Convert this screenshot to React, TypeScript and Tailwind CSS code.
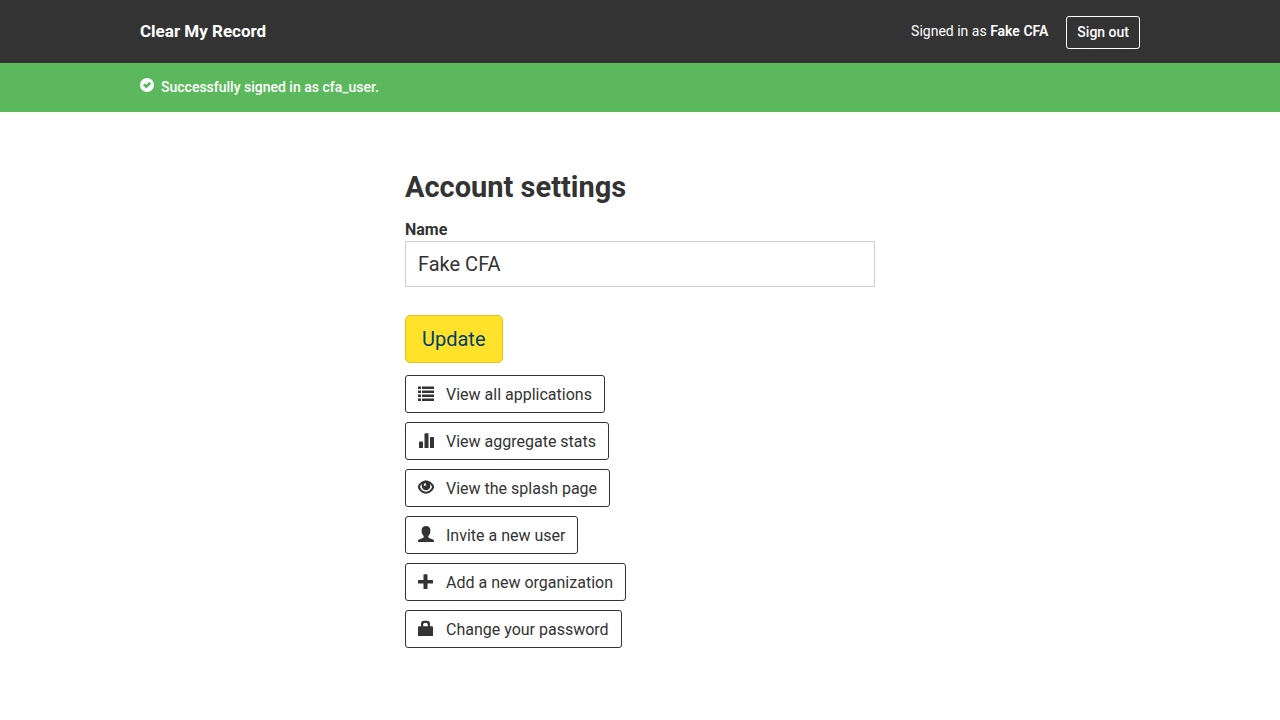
import type { ReactNode } from "react";

function Icon({ children }: { children: ReactNode }) {
  return (
    <svg viewBox="0 0 16 16" className="mb-1 size-4 shrink-0 fill-current" aria-hidden="true">
      {children}
    </svg>
  );
}

const actions: { label: string; icon: ReactNode }[] = [
  {
    label: "View all applications",
    icon: (
      <path d="M0 1.400h3v2.600H0zM4 1.400h12v2.600H4zM0 5.400h3v2.600H0zM4 5.400h12v2.600H4zM0 9.400h3v2.600H0zM4 9.400h12v2.600H4zM0 13.400h3v2.600H0zM4 13.400h12v2.600H4z" />
    ),
  },
  {
    label: "View aggregate stats",
    icon: (
      <path d="M1.800 9.500h2.400q.8 0 .8.800V16H1V10.300q0-.8.800-.8zM7.300 1.300h2.400q.8 0 .8.800V16H6.500V2.100q0-.8.800-.8zM12.800 5h2.400q.8 0 .8.800V16H12V5.800q0-.8.800-.8z" />
    ),
  },
  {
    label: "View the splash page",
    icon: (
      <path
        fillRule="evenodd"
        d="M8 1.600C4 1.600 1 4.700-.5 8 1 11.600 4.200 14.700 8 14.700S15 11.600 16.500 8C15 4.700 12 1.600 8 1.600zM8 12.700C5.400 12.700 3.200 11 1.900 8.100 2.600 6.500 3.400 5.500 4.200 4.800A4.500 4.500 0 0 0 3.700 7a4.300 4.300 0 0 0 8.600 0 4.500 4.500 0 0 0-.5-2.200C12.600 5.500 13.400 6.500 14.100 8.100 12.800 11 10.600 12.700 8 12.700zM7.400 4 8.400 6.300 6 7C5.500 5.700 6.100 4.400 7.400 4z"
      />
    ),
  },
  {
    label: "Invite a new user",
    icon: (
      <path d="M8 0C5.100 0 3.600 1.700 3.600 4.100c0 .8.100 1.300.3 1.900-.5.300-.2 1.500.5 2 .3.900.7 1.600 1.300 2.100v1c0 .5-.3.800-.8 1L1 13.500c-.7.300-1 .8-1 1.400V16h16v-1.100c0-.6-.3-1.100-1-1.400l-3.900-1.400c-.5-.2-.8-.5-.8-1v-1c.6-.5 1-1.200 1.300-2.100.7-.5 1-1.700.5-2 .2-.6.300-1.100.3-1.900C12.400 1.700 10.900 0 8 0z" />
    ),
  },
  {
    label: "Add a new organization",
    icon: (
      <path d="M6.100 1.200h2.800q.6 0 .6.600V6.900h4.900q.6 0 .6.600v2.400q0 .6-.6.600H9.500v4.900q0 .6-.6.600H6.100q-.6 0-.6-.6v-4.900H.6q-.6 0-.6-.6V7.500q0-.6.600-.6h4.900V1.800q0-.6.600-.6z" />
    ),
  },
  {
    label: "Change your password",
    icon: (
      <path
        fillRule="evenodd"
        d="M6 .8h3Q12 .8 12 3.800V6.300h2q1 0 1 1v8q0 1-1 1H1q-1 0-1-1v-8q0-1 1-1h2V3.800Q3 .8 6 .8zM6.500 3Q5.200 3.200 5.200 4.500v1.800h4.600V4.500Q9.800 3.200 8.500 3z"
      />
    ),
  },
];

export default function App() {
  return (
    <div className="min-h-screen bg-white font-[Roboto,sans-serif] text-[#333333]">
      <header className="bg-[#333333] px-6 pt-4 pb-3.5 text-white">
        <div className="mx-auto flex max-w-[1000px] items-start justify-between">
          <a href="#" className="text-[17px] leading-[30px] font-bold">
            Clear My Record
          </a>
          <div className="flex items-start gap-[18px] text-sm">
            <p className="leading-[30px]">
              Signed in as <strong className="font-semibold">Fake CFA</strong>
            </p>
            <button
              type="button"
              className="h-[33px] rounded-[3px] border border-white px-2.5 pb-px font-medium"
            >
              Sign out
            </button>
          </div>
        </div>
      </header>
      <div role="status" className="bg-[#5cb85c] px-6 text-white">
        <div className="mx-auto flex h-[49px] max-w-[1000px] items-center gap-[7px] pb-0.5 text-sm font-medium">
          <svg viewBox="0 0 14 14" className="mb-1 size-3.5 fill-current" aria-hidden="true">
            <path
              fillRule="evenodd"
              d="M7 0a7 7 0 1 0 0 14A7 7 0 0 0 7 0zM6.400 10.600 2.900 7.200 4.900 5.200 6.400 6.700 9.300 3.800 11.200 5.700z"
            />
          </svg>
          <p>Successfully signed in as cfa_user.</p>
        </div>
      </div>
      <main className="mx-auto max-w-[470px] pt-14 pb-16">
        <h1 className="text-[29px] leading-[38px] font-bold">Account settings</h1>
        <form className="mt-3" onSubmit={(event) => event.preventDefault()}>
          <label htmlFor="name" className="block text-base leading-[23px] font-bold">
            Name
          </label>
          <input
            id="name"
            type="text"
            defaultValue="Fake CFA"
            className="block h-[46px] w-full border border-[#cccccc] px-3 text-xl outline-none"
          />
          <button
            type="submit"
            className="mt-7 block h-12 rounded-[5px] border border-[#e0c51b] bg-[#ffe229] px-4 text-xl text-[#00416b]"
          >
            Update
          </button>
        </form>
        <nav className="mt-3 flex flex-col items-start gap-[9px]">
          {actions.map(({ label, icon }) => (
            <a
              key={label}
              href="#"
              className="flex h-[38px] items-center gap-3 rounded-[3px] border border-[#333333] px-3 pt-0.5 text-base"
            >
              <Icon>{icon}</Icon>
              {label}
            </a>
          ))}
        </nav>
      </main>
    </div>
  );
}
